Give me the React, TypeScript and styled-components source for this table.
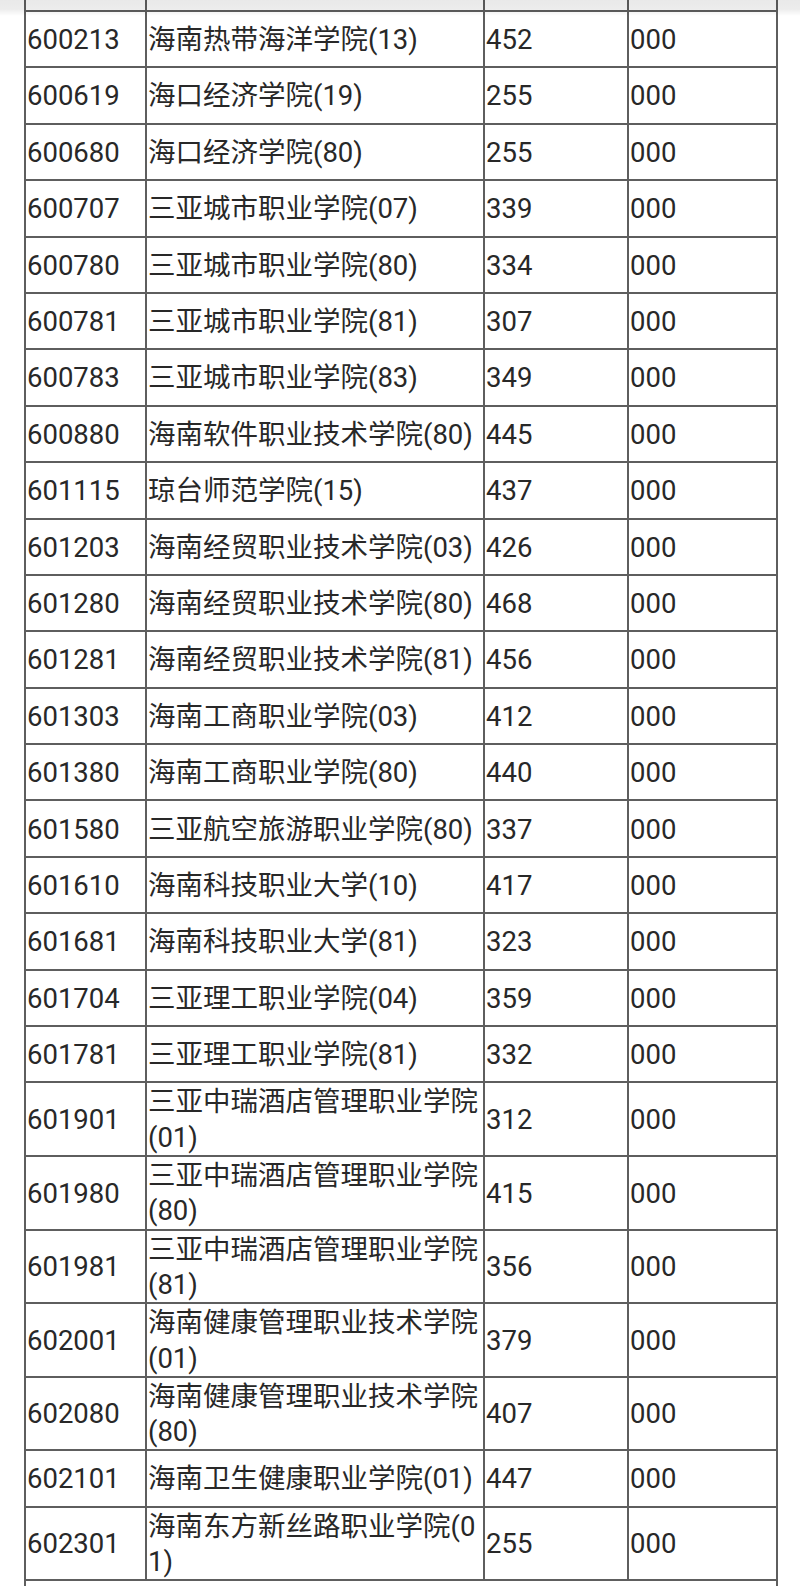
import React from "react";
import styled, { createGlobalStyle } from "styled-components";

const GlobalStyle = createGlobalStyle`
  html, body {
    margin: 0;
    padding: 0;
    background: #ffffff;
  }
  body {
    font-family: Roboto, "Noto Sans CJK SC", sans-serif;
    color: #282828;
  }
`;

type Row = [string, string, string, string];

const rows: Row[] = [
  ["600213", "海南热带海洋学院(13)", "452", "000"],
  ["600619", "海口经济学院(19)", "255", "000"],
  ["600680", "海口经济学院(80)", "255", "000"],
  ["600707", "三亚城市职业学院(07)", "339", "000"],
  ["600780", "三亚城市职业学院(80)", "334", "000"],
  ["600781", "三亚城市职业学院(81)", "307", "000"],
  ["600783", "三亚城市职业学院(83)", "349", "000"],
  ["600880", "海南软件职业技术学院(80)", "445", "000"],
  ["601115", "琼台师范学院(15)", "437", "000"],
  ["601203", "海南经贸职业技术学院(03)", "426", "000"],
  ["601280", "海南经贸职业技术学院(80)", "468", "000"],
  ["601281", "海南经贸职业技术学院(81)", "456", "000"],
  ["601303", "海南工商职业学院(03)", "412", "000"],
  ["601380", "海南工商职业学院(80)", "440", "000"],
  ["601580", "三亚航空旅游职业学院(80)", "337", "000"],
  ["601610", "海南科技职业大学(10)", "417", "000"],
  ["601681", "海南科技职业大学(81)", "323", "000"],
  ["601704", "三亚理工职业学院(04)", "359", "000"],
  ["601781", "三亚理工职业学院(81)", "332", "000"],
  ["601901", "三亚中瑞酒店管理职业学院(01)", "312", "000"],
  ["601980", "三亚中瑞酒店管理职业学院(80)", "415", "000"],
  ["601981", "三亚中瑞酒店管理职业学院(81)", "356", "000"],
  ["602001", "海南健康管理职业技术学院(01)", "379", "000"],
  ["602080", "海南健康管理职业技术学院(80)", "407", "000"],
  ["602101", "海南卫生健康职业学院(01)", "447", "000"],
  ["602301", "海南东方新丝路职业学院(01)", "255", "000"],
];

const Page = styled.div`
  position: relative;
  width: 800px;
  overflow: hidden;
`;

const TopShade = styled.div`
  position: absolute;
  left: 0;
  top: 0;
  width: 100%;
  height: 16px;
  pointer-events: none;
  background: linear-gradient(
    to bottom,
    rgba(0, 0, 0, 0.085) 0px,
    rgba(0, 0, 0, 0.075) 9px,
    rgba(0, 0, 0, 0) 16px
  );
`;

const Table = styled.table`
  margin-left: 24px;
  width: 754px;
  table-layout: fixed;
  border-collapse: collapse;
  border-style: hidden solid;
  border-width: 2px;
  border-color: #5e5e5e;
  font-size: 27.5px;
  line-height: 35.3px;
`;

const Cell = styled.td<{ $h?: number }>`
  border: 2px solid #5e5e5e;
  padding: 1px 0 0 1px;
  height: ${(p) => (p.$h !== undefined ? `${p.$h}px` : "auto")};
  vertical-align: middle;
  word-break: break-all;
  white-space: normal;
`;

const EdgeCell = styled.td<{ $h: number }>`
  border: 2px solid #5e5e5e;
  padding: 0;
  height: ${(p) => p.$h}px;
`;

export default function App() {
  return (
    <>
      <GlobalStyle />
      <Page>
        <Table>
          <colgroup>
            <col style={{ width: 121 }} />
            <col style={{ width: 338 }} />
            <col style={{ width: 144 }} />
            <col style={{ width: 149 }} />
          </colgroup>
          <tbody>
            <tr>
              <EdgeCell $h={10} />
              <EdgeCell $h={10} />
              <EdgeCell $h={10} />
              <EdgeCell $h={10} />
            </tr>
            {rows.map((r) => (
              <tr key={r[0]}>
                <Cell $h={53.4}>{r[0]}</Cell>
                <Cell $h={53.4}>{r[1]}</Cell>
                <Cell $h={53.4}>{r[2]}</Cell>
                <Cell $h={53.4}>{r[3]}</Cell>
              </tr>
            ))}
            <tr>
              <EdgeCell colSpan={4} $h={20} />
            </tr>
          </tbody>
        </Table>
        <TopShade />
      </Page>
    </>
  );
}
